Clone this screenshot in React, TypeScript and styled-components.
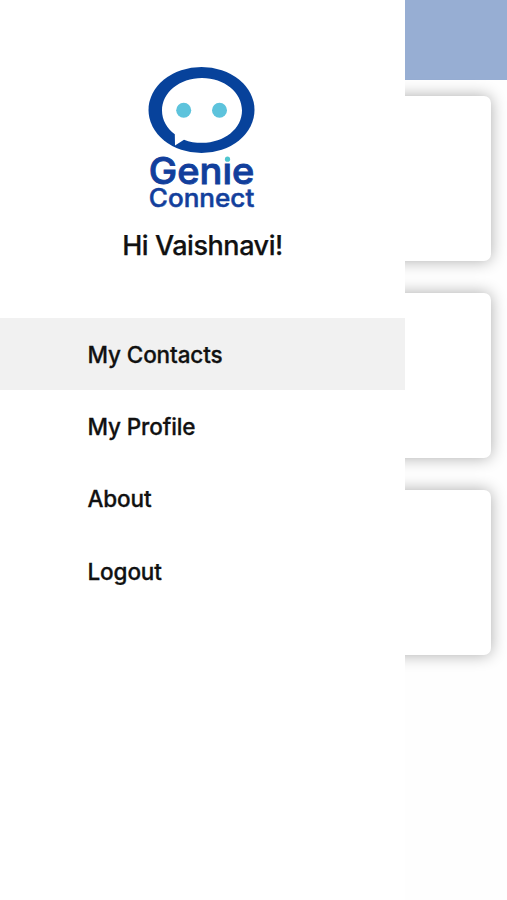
import React from 'react';
import styled, { createGlobalStyle } from 'styled-components';

const GlobalStyle = createGlobalStyle`
  * { box-sizing: border-box; }
  body { margin: 0; background: #fff; }
`;

const Screen = styled.div`
  position: relative;
  width: 507px;
  height: 900px;
  overflow: hidden;
  background: #fefefe;
  color: #111;
  font-family: Inter, "Liberation Sans", sans-serif;
`;

const TopBar = styled.header`
  height: 79.5px;
  background: #97aed3;
`;

const CardList = styled.main`
  display: flex;
  flex-direction: column;
  gap: 32.4px;
  padding: 16.5px 16px 0;
`;

const Card = styled.section`
  height: 164.8px;
  border-radius: 7px;
  background: #fff;
  box-shadow: 0 0 16px rgba(0, 0, 0, 0.33);
`;

const Drawer = styled.aside`
  position: absolute;
  inset: 0 auto 0 0;
  width: 405px;
  background: #fff;
`;

const Profile = styled.div`
  display: flex;
  flex-direction: column;
  align-items: center;
  height: 318px;
  padding-top: 60px;
`;

const Logo = styled.svg`
  display: block;
  width: 125px;
  height: 155px;
  flex: none;
`;

const Greeting = styled.h1`
  margin: 13px 0 0;
  font-size: 27px;
  line-height: 36px;
  font-weight: 500;
  letter-spacing: -0.45px;
  -webkit-text-stroke: 0.25px currentColor;
  white-space: nowrap;
`;

const Menu = styled.nav`
  display: flex;
  flex-direction: column;
`;

const MenuItem = styled.a<{ $active?: boolean }>`
  display: flex;
  align-items: center;
  height: 72.4px;
  padding-left: 87.5px;
  background: ${({ $active }) => ($active ? '#f1f1f1' : 'transparent')};
  font-size: 22.5px;
  font-weight: 500;
  letter-spacing: -0.12px;
  -webkit-text-stroke: 0.3px currentColor;
`;

const items = [
  { label: 'My Contacts', active: true },
  { label: 'My Profile' },
  { label: 'About' },
  { label: 'Logout' },
];

const GenieLogo = () => (
  <Logo viewBox="0 0 125 155" role="img" aria-label="Genie Connect">
    <ellipse cx="61.5" cy="50" rx="53" ry="43" fill="#07429b" />
    <path
      d="M62 18C39.500 18 22 32.500 22 50.500C22 60 27 68.500 34.800 74.300L35 85.500L44 79.700C49.500 82 55.500 82.800 62 82.800C84.500 82.800 102 68.500 102 50.500C102 32.500 84.500 18 62 18Z"
      fill="#fff"
    />
    <circle cx="43.700" cy="50.300" r="7.500" fill="#5dc3dc" />
    <circle cx="79.500" cy="50.300" r="7.500" fill="#5dc3dc" />
    <g fill="#123f9c" stroke="#123f9c" fontFamily="Inter, 'Liberation Sans', sans-serif" fontWeight="500">
      <text x="8.800" y="124.300" fontSize="37" strokeWidth="0.900" textLength="105.500" lengthAdjust="spacingAndGlyphs">Genıe</text>
      <text x="8.800" y="147.400" fontSize="25" strokeWidth="0.500" textLength="105.500" lengthAdjust="spacingAndGlyphs">Connect</text>
    </g>
    <circle cx="87.500" cy="99.200" r="2.600" fill="#4fc6cf" />
  </Logo>
);

export default function App() {
  return (
    <Screen>
      <GlobalStyle />
      <TopBar />
      <CardList>
        <Card />
        <Card />
        <Card />
      </CardList>
      <Drawer>
        <Profile>
          <GenieLogo />
          <Greeting>Hi Vaishnavi!</Greeting>
        </Profile>
        <Menu>
          {items.map((item) => (
            <MenuItem key={item.label} $active={item.active}>
              {item.label}
            </MenuItem>
          ))}
        </Menu>
      </Drawer>
    </Screen>
  );
}
